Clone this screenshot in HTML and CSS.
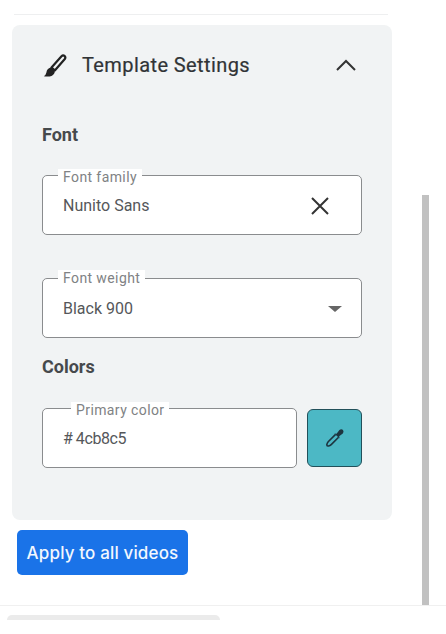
FILE: index.html
```html
<!DOCTYPE html>
<html lang="en">
<head>
    <meta charset="UTF-8">
    <title>Template Settings</title>
    <link rel="stylesheet" href="styles.css">
</head>
<body>
    <div class="scrollbar"></div>

    <main class="content">
        <div class="topline"></div>

        <section class="panel">
            <div class="panel-head">
                <svg class="brush" width="26" height="26" viewBox="0 0 26 26">
                    <path d="M9.5 15.5 L19.5 4.2 Q21 2.8 22.6 4 Q24 5.4 22.8 7 L12.8 18.4 Z" fill="none" stroke="#222" stroke-width="2.2" stroke-linejoin="round"/>
                    <path d="M8.6 15.6 Q13 16.4 12.8 20 Q11.8 24 7.6 24.4 Q4.6 24.8 1.8 24.2 Q4 22.8 4.4 20.4 Q5 16.6 8.6 15.6 Z" fill="#222"/>
                </svg>
                <h2>Template Settings</h2>
                <svg class="chevron" width="24" height="24" viewBox="0 0 24 24">
                    <path d="M3 17 L12 8 L21 17" fill="none" stroke="#333" stroke-width="2"/>
                </svg>
            </div>

            <h3 class="font-title">Font</h3>

            <div class="field field-family">
                <span class="field-label">Font family</span>
                <span class="field-value">Nunito Sans</span>
                <svg class="clear" width="20" height="20" viewBox="0 0 20 20">
                    <path d="M2 2 L18 18 M18 2 L2 18" stroke="#333" stroke-width="2"/>
                </svg>
            </div>

            <div class="field field-weight">
                <span class="field-label">Font weight</span>
                <span class="field-value">Black 900</span>
                <span class="arrow"></span>
            </div>

            <h3 class="colors-title">Colors</h3>

            <div class="color-row">
                <div class="field field-color">
                    <span class="field-label">Primary color</span>
                    <span class="field-value"><span class="hash">#</span><span class="hex">4cb8c5</span></span>
                </div>
                <button class="swatch">
                    <svg width="20" height="20" viewBox="0 0 20 20">
                        <path d="M10.6 6.4 L3.2 13.8 Q2 15.2 1.8 16.8 Q2 18.2 3.6 18 Q5 17.8 6.2 16.6 L13.6 9.2" fill="none" stroke="#1d3540" stroke-width="1.6"/>
                        <path d="M9.4 5.6 L11.6 5.8 L14.4 2 Q16.4 0.6 18 2 Q19.2 3.8 17.8 5.4 L14.2 8.2 L14.6 10.6 Z" fill="#1d3540"/>
                    </svg>
                </button>
            </div>
        </section>

        <button class="apply">Apply to all videos</button>
    </main>

    <footer class="bottom">
        <div class="bottom-block"></div>
    </footer>
</body>
</html>
```

FILE: styles.css
```css
* {
    box-sizing: border-box;
}
html, body {
    height: 100%;
}
body {
    margin: 0;
    background: #fff;
    font-family: Roboto, "Liberation Sans", sans-serif;
    overflow: hidden;
    position: relative;
}
.scrollbar {
    position: absolute;
    left: 422px;
    top: 195px;
    width: 7px;
    height: 410px;
    background: #c1c1c1;
}
.content {
    height: 605px;
    padding-top: 14px;
}
.topline {
    height: 1px;
    margin: 0 58px 0 14px;
    background: #eeeff0;
}
.panel {
    width: 380px;
    height: 495px;
    margin: 10px 0 0 12px;
    padding: 0 30px;
    background: #f1f3f4;
    border-radius: 8px;
}
.panel-head {
    display: flex;
    align-items: center;
    height: 78px;
}
.brush {
    margin-top: 2px;
    margin-right: 14px;
}
.panel-head h2 {
    flex: 1;
    margin: 1px 0 0;
    font-size: 20px;
    font-weight: 400;
    letter-spacing: 0.4px;
    color: #303336;
    -webkit-text-stroke: 0.2px #303336;
}
.chevron {
    margin-right: 4px;
    margin-top: 2px;
}
h3 {
    margin: 0;
    font-size: 18px;
    line-height: 22px;
    font-weight: 700;
    color: #46494c;
}
.font-title {
    margin-top: 21px;
}
.field {
    position: relative;
    display: flex;
    align-items: center;
    height: 60px;
    padding: 0 20px;
    padding-top: 1px;
    background: #fff;
    border: 1px solid #8a8c8e;
    border-radius: 5px;
}
.field-family {
    margin-top: 29px;
    justify-content: space-between;
}
.field-weight {
    margin-top: 43px;
    justify-content: space-between;
}
.field-label {
    position: absolute;
    left: 15px;
    top: -7px;
    padding: 0 5px;
    background: #fff;
    font-size: 14px;
    line-height: 17px;
    letter-spacing: 0.4px;
    color: #808284;
}
.field-weight .field-label {
    top: -9px;
}
.field-color .field-label {
    left: 28px;
}
.field-value {
    font-size: 16px;
    color: #55575a;
}
.hash {
    margin-right: 3px;
}
.hex {
    letter-spacing: -0.4px;
}
.clear {
    margin-right: 11px;
}
.arrow {
    width: 0;
    height: 0;
    margin-right: -1px;
    border-left: 7px solid transparent;
    border-right: 7px solid transparent;
    border-top: 6px solid #666;
}
.colors-title {
    margin-top: 18px;
}
.color-row {
    display: flex;
    align-items: center;
    gap: 10px;
    margin-top: 30px;
}
.field-color {
    width: 255px;
}
.swatch {
    display: flex;
    align-items: center;
    justify-content: center;
    width: 55px;
    height: 58px;
    padding: 0;
    background: #4cb8c5;
    border: 1px solid #22505a;
    border-radius: 6px;
}
.apply {
    display: block;
    width: 171px;
    height: 45px;
    margin: 10px 0 0 17px;
    padding: 0;
    background: #1a73e8;
    border: 0;
    border-radius: 5px;
    font-family: Inter, sans-serif;
    font-size: 17px;
    font-weight: 500;
    letter-spacing: 0.15px;
    color: #f2f7fe;
}
.bottom {
    height: 29px;
    padding: 9px 0 0 7px;
    border-top: 1px solid #f0f0f0;
}
.bottom-block {
    width: 213px;
    height: 5px;
    background: #ebebeb;
    border-radius: 6px 6px 0 0;
}
```
